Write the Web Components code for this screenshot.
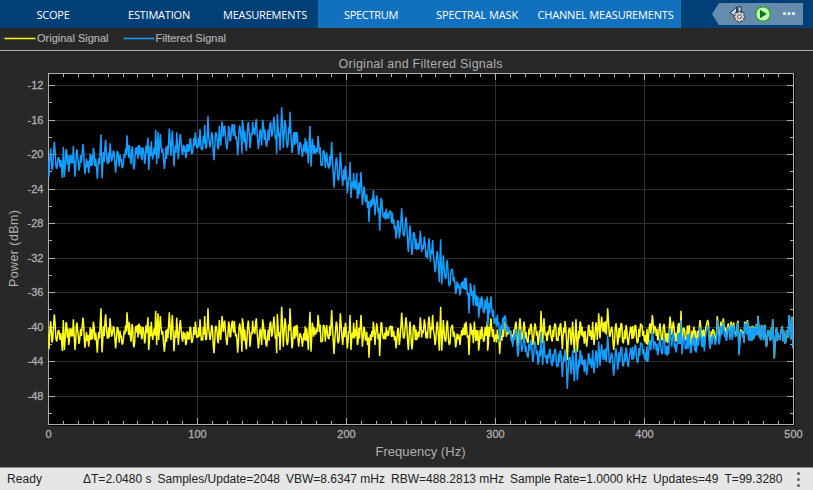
<!DOCTYPE html>
<html lang="en"><head><meta charset="utf-8"><title>Spectrum Analyzer</title>
<style>html,body{margin:0;width:813px;height:490px;overflow:hidden;background:#282828}</style></head>
<body><spectrum-analyzer></spectrum-analyzer>
<script>
function define(name, html, setup){
  const t=document.createElement('template'); t.innerHTML=html;
  customElements.define(name, class extends HTMLElement{
    connectedCallback(){
      if(this.shadowRoot) return;
      this.attachShadow({mode:'open'}).append(t.content.cloneNode(true));
      if(setup) setup(this,this.shadowRoot);
    }
  });
}
// A single-line label whose glyphs are tracked to fill the given width.
define('fit-text','<style>:host{display:block;white-space:nowrap;flex:none}span{display:inline-block}</style><span></span>',(el,r)=>{
  const s=r.querySelector('span'); s.textContent=el.getAttribute('text');
  const w=+el.getAttribute('w'); el.style.width=w+'px';
  const n=s.textContent.length;
  s.style.letterSpacing=((w-s.getBoundingClientRect().width)/n)+'px';
});
define('tool-tab',`<style>:host{display:flex;align-items:center;justify-content:center;height:28px;padding-top:1px;box-sizing:border-box;font:11px "Open Sans","Noto Sans",sans-serif;color:#fff;background:#004076}
:host([context]){background:#1171be}</style><slot></slot>`);
define('quick-tools',`<style>:host{display:block;margin:3px 10px 0 31px;width:91px;height:22px}svg{display:block}</style>
<svg width="91" height="22" viewBox="712 3 91 22">
<path d="M712 14 719 3H803V25H719Z" fill="#668cad"/>
<path d="M730 12.8 736.6 7.2V17Z" fill="#b8e2f8" stroke="#1d2b38" stroke-width="1"/>
<path d="M738 6.8h3.2v10H738z" fill="#b8e2f8" stroke="#1d2b38" stroke-width="1"/>
<g stroke="#3c3c3c" stroke-width=".9" fill="#d2d2d2"><path d="M738.5 11.2h2l.3 1.3 1.1.4 1.2-.8 1.2 1.2-.8 1.2.5 1.1 1.2.4v1.6l-1.3.3-.4 1.1.8 1.2-1.2 1.2-1.2-.7-1.1.5-.3 1.2h-2l-.3-1.2-1.1-.5-1.2.7-1.2-1.2.8-1.2-.4-1.1-1.3-.3V16l1.2-.4.5-1.1-.8-1.2 1.2-1.2 1.2.8 1.1-.4z"/><circle cx="739.5" cy="16.7" r="1.8" fill="#fff"/></g>
<circle cx="763" cy="14" r="7.3" fill="#c9ffc2" stroke="#29a522" stroke-width="1.5"/><path d="M760 9.8 767 14 760 18.2Z" fill="#087b10"/>
<g fill="#edf4f8"><rect x="783" y="12.2" width="3" height="2.8" rx=".7"/><rect x="787.5" y="12.2" width="3" height="2.8" rx=".7"/><rect x="792" y="12.2" width="3" height="2.8" rx=".7"/></g></svg>`);
define('tool-strip',`<style>:host{display:flex;height:28px;background:#004076}.s{width:106px}.w{width:151px}</style>
<tool-tab class="s"><fit-text text="SCOPE" w="33"></fit-text></tool-tab>
<tool-tab class="s"><fit-text text="ESTIMATION" w="62"></fit-text></tool-tab>
<tool-tab class="s"><fit-text text="MEASUREMENTS" w="84"></fit-text></tool-tab>
<tool-tab context class="s"><fit-text text="SPECTRUM" w="54"></fit-text></tool-tab>
<tool-tab context class="s"><fit-text text="SPECTRAL MASK" w="82"></fit-text></tool-tab>
<tool-tab context class="w"><fit-text text="CHANNEL MEASUREMENTS" w="136"></fit-text></tool-tab>
<quick-tools></quick-tools>`);
define('legend-item',`<style>:host{display:flex;align-items:center;gap:2px}i{width:30px;height:1px;margin-top:1px;background:var(--c);box-shadow:0 0 0 1px color-mix(in srgb,var(--c) 25%,transparent)}</style><i></i><slot></slot>`);
define('plot-legend',`<style>:host{display:flex;align-items:center;box-sizing:border-box;height:23px;padding:0 0 3px 5px;gap:15px;border-bottom:1px solid #afafaf;font:11px "Liberation Sans",Arial,sans-serif;color:#afafaf;-webkit-text-stroke:.2px #afafaf}</style>
<legend-item style="--c:#ff1"><fit-text text="Original Signal" w="71.5"></fit-text></legend-item>
<legend-item style="--c:#139fff"><fit-text text="Filtered Signal" w="70.5"></fit-text></legend-item>`);
define('spectrum-plot',`<style>:host{display:block;width:813px;height:416px}svg{display:block}text{font-family:"Liberation Sans",Arial,sans-serif;fill:#afafaf}.n{font-size:11px;stroke:#afafaf;stroke-width:.3px}</style><svg width="813" height="416" viewBox="0 51 813 416"></svg>`,(el,r)=>{
  // Extremes of the noise trace, on a grid of thirds of a pixel: [x offset, "x,y ..."].
  const A=[[0,"147,130 147,178 152,93 156,158 163,73 170,155 176,120 180,150 187,183 190,90 193,180 198,97 206,165 212,120 220,88 225,180 231,98 237,162 249,83 255,173 266,170 280,95 292,188 303,55 306,187 317,73 322,145 330,85 335,140 340,108 347,175 354,115 358,158 368,162 381,67 386,135 388,97 393,155 396,102 402,172 408,108 416,103 424,140 430,115 434,160 444,82 446,180 454,95 458,150 467,62 470,165 474,70 476,150 481,78 493,185 508,67 513,150 517,75 522,184 530,83 535,165 541,90 548,155 557,165 570,110 577,155 586,95 592,140 600,88 606,145 614,78 617,150 624,55 630,150 635,105 642,190 649,110 655,160 658,90 662,150 666,78 670,125 674,92 681,165 686,95 692,140 697,92 703,93 713,188 719,100 726,185 727,85 739,178 745,92 750,170 758,92 769,85 775,175 779,125"],
  [780,"5,165 8,88 20,170 32,95 35,140 42,80 50,190 52,72 60,180 65,50 70,170 75,85 82,165 90,55 96,175 102,110 110,105 116,170 122,135 127,170 140,115 145,180 150,65 153,185 157,98 165,130 174,75 185,155 192,105 196,155 200,105 205,145 215,60 222,192 229,95 235,160 241,70 248,165 256,98 262,175 270,75 273,180 281,98 290,90 292,165 303,75 307,170 312,110 318,150 327,203 340,95 345,165 350,100 359,198 363,97 370,145 390,110 408,175 415,115 418,165 425,68 432,145 438,82 445,180 450,95 456,178 462,105 470,150 481,82 487,120 493,88 500,125 507,80 515,120 518,75 525,165 532,95 538,182 542,50 545,182 550,90 556,155 562,92 568,165 575,110 587,172 600,165 605,120 618,95 627,195 631,100 640,160 643,95 656,182 665,110 671,155 682,95 683,182 693,85 705,145 719,192 735,95 750,130 758,160 768,95 774,170"],
  [1560,"0,85 5,150 12,95 22,155 34,105 38,165 45,100 54,165 63,62 68,160 72,85 80,150 88,110 95,150 105,100 112,145 122,100 127,178 135,93 142,210 148,115 154,165 158,95 163,188 168,88 172,185 180,95 188,140 200,170 205,108 215,150 218,95 222,165 228,97 232,150 236,70 240,145 245,80 253,98 263,55 268,135 275,110 281,180 288,100 293,165 303,100 310,160 318,105 325,165 332,110 340,145 345,105 352,160 364,105 375,155 383,165 390,100 397,75 405,110 415,145 420,100 425,150 432,102 438,150 446,155 450,80 455,135 460,95 468,155 475,100 483,62 486,165 492,115 498,150 508,105 512,165 520,125 528,165 540,90 545,150 553,165 558,110 563,90 570,160 580,120 586,150 592,78 597,150 603,95 610,85 618,140 625,100 630,140 633,95 641,97 648,130 654,92 657,190 664,125 672,155 674,95 682,90 690,145 700,110 714,78 720,135 735,105 739,170 745,120 750,150 758,88 763,205 768,120 778,140 785,120 795,160 802,125 808,75 814,130 816,80 819,175"]];
  const key=A.flatMap(([o,s])=>s.split(' ').map(p=>{const[x,y]=p.split(',').map(Number);return[(x+o)/3,290+y/3]})).sort((a,b)=>a[0]-b[0]);
  let seed=71; const rnd=()=>(seed=(seed*16807)%2147483647)/2147483647;
  const noise=[];
  key.forEach((p,i)=>{
    noise.push(p); const q=key[i+1]; if(!q) return;
    const n=Math.round((q[0]-p[0])/.74), ph=p[1]<q[1]?1:0;
    for(let k=1;k<n;k++){
      const t=k/n, lin=p[1]+(q[1]-p[1])*t, up=(k+ph)%2?1:-1;
      noise.push([p[0]+(q[0]-p[0])*t, n>2? .3*lin+.7*(333.5+up*(1+rnd()*11)):lin+(rnd()-.5)*7]);
    }
  });
  // Vertical distance of the filtered trace from the original one.
  const F=[[48,-172.5],[101,-174],[127,-177],[156,-181],[208,-192],[240,-198],[270,-200],[281,-199.5],[290,-196.6],[310,-185.7],[332,-168],[350,-153],[361,-143],[402,-104],[441,-67],[447,-61],[491,-22],[505,-6],[518,10],[541,21],[567,29],[599,28],[608,27],[652,16],[681,9.6],[717,4.6],[739,2],[758,.5],[795,0]];
  const off=x=>{let i=0;while(i<F.length-2&&F[i+1][0]<x)i++;const a=F[i],b=F[i+1];return a[1]+(b[1]-a[1])*(x-a[0])/(b[0]-a[0])};
  const line=f=>noise.map(p=>p[0].toFixed(2)+','+f(p).toFixed(2)).join(' ');
  let grid='',tick='',txt='';
  for(let i=0;i<=50;i++){const x=48.5+i*14.9,xx=Math.floor(x)+.5,l=i%10?3:6;
    if(i%10===0&&i&&i<50)grid+=`M${xx} 74V424`;
    tick+=`M${xx} 74v${l}M${xx} 424v-${l}`;
    if(i%10===0)txt+=`<text class="n" x="${xx}" y="438" text-anchor="middle">${i*10}</text>`;}
  for(let v=-12;v>=-50;v-=2){const y=Math.floor(85.6+(-12-v)*8.625)+.5,m=v%4===0,l=m?6:3;
    if(m)grid+=`M49 ${y}H793`;
    tick+=`M49 ${y}h${l}M793 ${y}h-${l}`;
    if(m)txt+=`<text class="n" x="43.5" y="${y+3.5}" text-anchor="end">${v}</text>`;}
  r.querySelector('svg').innerHTML=`<rect x="48" y="73" width="747" height="353" fill="#000"/>
  <path d="${grid}" stroke="#303030" fill="none"/>
  <path d="${tick}" stroke="#afafaf" fill="none"/><rect x="48.5" y="73.5" width="745" height="351" fill="none" stroke="#afafaf"/>
  <clipPath id="c"><rect x="48" y="73" width="746" height="352"/></clipPath>
  <g clip-path="url(#c)" fill="none" stroke-width="1.5" stroke-linejoin="bevel"><polyline stroke="#ff1" points="${line(p=>p[1])}"/><polyline stroke="#139fff" points="${line(p=>p[1]+off(p[0]))}"/></g>${txt}
  <text x="338.5" y="68" font-size="12.5" textLength="164">Original and Filtered Signals</text>
  <text x="375.5" y="456" font-size="13" textLength="90">Frequency (Hz)</text>
  <text transform="translate(18 287) rotate(-90)" font-size="12.5" textLength="77">Power (dBm)</text>`;
});
define('status-bar',`<style>:host{display:flex;align-items:center;box-sizing:border-box;height:23px;padding:0 0 0 7px;background:#e6e6e6;border-top:1px solid #8b8b8b;font:12px "Liberation Sans",Arial,sans-serif;color:#212121}
.m{display:flex;gap:6px;margin-left:41px}.d{display:grid;gap:3px;margin-left:14px}.d i{width:3px;height:3px;border-radius:50%;background:#616161}</style>
<fit-text text="Ready" w="35"></fit-text>
<div class="m"><fit-text text="ΔT=2.0480 s" w="68.5"></fit-text><fit-text text="Samples/Update=2048" w="122.5"></fit-text><fit-text text="VBW=8.6347 mHz" w="99"></fit-text><fit-text text="RBW=488.2813 mHz" w="113"></fit-text><fit-text text="Sample Rate=1.0000 kHz" w="137"></fit-text><fit-text text="Updates=49" w="65.5"></fit-text><fit-text text="T=99.3280" w="58"></fit-text></div>
<div class="d"><i></i><i></i><i></i></div>`);
define('spectrum-analyzer',`<style>:host{display:flex;flex-direction:column;width:813px;height:490px;background:#282828}</style><tool-strip></tool-strip><plot-legend></plot-legend><spectrum-plot></spectrum-plot><status-bar></status-bar>`);
</script></body></html>
